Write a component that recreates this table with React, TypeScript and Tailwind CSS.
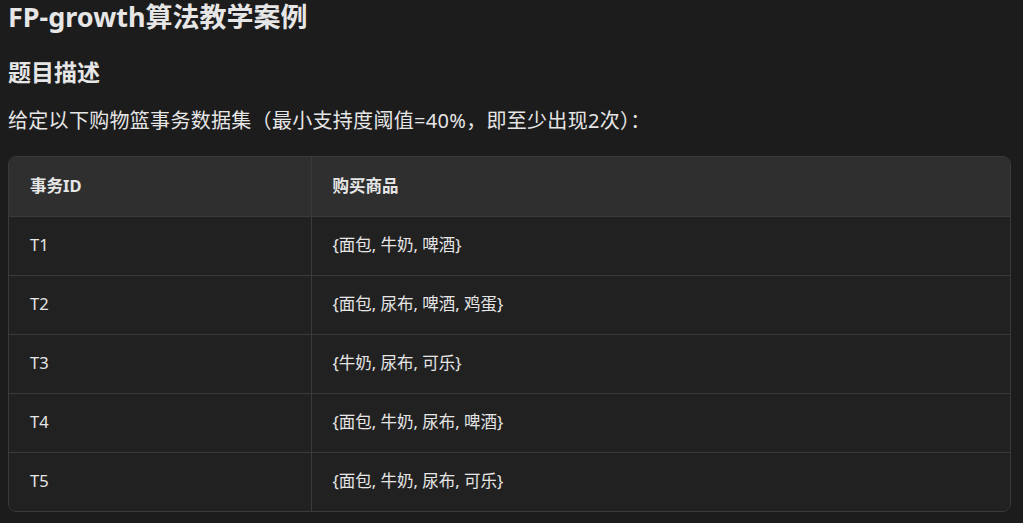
const rows = [
  { id: 'T1', items: '{面包, 牛奶, 啤酒}' },
  { id: 'T2', items: '{面包, 尿布, 啤酒, 鸡蛋}' },
  { id: 'T3', items: '{牛奶, 尿布, 可乐}' },
  { id: 'T4', items: '{面包, 牛奶, 尿布, 啤酒}' },
  { id: 'T5', items: '{面包, 牛奶, 尿布, 可乐}' },
];

export default function App() {
  return (
    <div
      className="min-h-[523px] bg-[#1c1c1c] px-2 pt-px text-[#e6e6e6]"
      style={{ fontFamily: '"Noto Sans", "Noto Sans CJK SC", sans-serif' }}
    >
      <h1 className="text-[27px] font-bold leading-[32px]">FP-growth算法教学案例</h1>
      <h2 className="mt-[23px] text-[23px] font-bold leading-[32px]">题目描述</h2>
      <p className="mt-[19px] text-[20px] leading-[28px] tracking-[0.3px]">给定以下购物篮事务数据集（最小支持度阈值=40%，即至少出现2次）：</p>
      <div className="mt-[21px] w-[1003px] overflow-hidden rounded-lg border border-[#3a3a3a]">
        <table className="w-full border-collapse text-[16.5px]">
          <thead>
            <tr className="h-[59px] bg-[#2f2f2f] text-left">
              <th className="w-[302px] border-r border-[#3a3a3a] px-[21px] font-bold">事务ID</th>
              <th className="px-[21px] font-bold">购买商品</th>
            </tr>
          </thead>
          <tbody className="bg-[#212121]">
            {rows.map((r) => (
              <tr key={r.id} className="h-[59px] border-t border-[#3a3a3a]">
                <td className="border-r border-[#3a3a3a] px-[21px]">{r.id}</td>
                <td className="px-[21px]">{r.items}</td>
              </tr>
            ))}
          </tbody>
        </table>
      </div>
    </div>
  );
}
